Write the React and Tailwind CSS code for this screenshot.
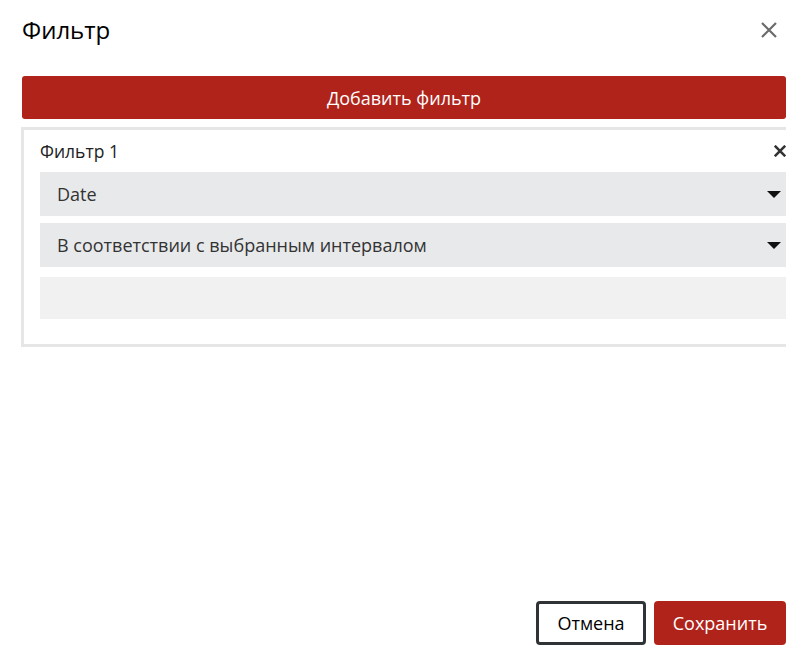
import React from "react";

const Caret = () => (
  <svg width="14" height="7" viewBox="0 0 14 7" className="shrink-0">
    <path d="M0 0h14L7 7z" fill="#111" />
  </svg>
);

const Cross = ({ size, color, width }) => (
  <svg width={size} height={size} viewBox="0 0 16 16">
    <path d="M1 1l14 14M15 1L1 15" stroke={color} strokeWidth={width} fill="none" />
  </svg>
);

export default function App() {
  return (
    <div className="h-[658px] w-[800px] bg-white flex flex-col font-['Open_Sans',sans-serif] text-[#222]">
      {/* Header */}
      <div className="flex items-center justify-between pl-[22px] pr-[23px] pt-[15px]">
        <h1 className="text-[24px] leading-[30px] text-black">Фильтр</h1>
        <Cross size={16} color="#6b6b6b" width={2.2} />
      </div>

      <div className="pl-[22px] pr-[14px] mt-[31px]">
        <button className="w-full h-[43px] rounded-[3px] bg-[#b0231a] text-white text-[18px] leading-[24px]">
          Добавить фильтр
        </button>
      </div>

      {/* Filter box, clipped at the right edge */}
      <div className="ml-[21px] mr-[14px] mt-[8px] overflow-hidden">
        <div className="w-[790px] border-[3px] border-[#e6e6e6] pl-[16px] pr-[20px] pt-[9px] pb-[25px]">
          <div className="flex items-center justify-between h-[24px] w-[746px]">
            <span className="text-[17.5px] leading-[24px] text-[#222]">Фильтр 1</span>
            <Cross size={12} color="#333" width={3.4} />
          </div>
          <div className="mt-[9px] w-[750px] flex flex-col">
            <div className="h-[44px] bg-[#e8e9ea] flex items-center justify-between pl-[17px] pr-[9px] text-[18px] leading-[24px] text-[#333]">
              <span>Date</span>
              <Caret />
            </div>
            <div className="mt-[7px] h-[44px] bg-[#e8e9ea] flex items-center justify-between pl-[17px] pr-[9px] text-[18px] leading-[24px] text-[#333]">
              <span>В соответствии с выбранным интервалом</span>
              <Caret />
            </div>
            <div className="mt-[10px] h-[42px] bg-[#f1f1f1]" />
          </div>
        </div>
      </div>

      {/* Footer */}
      <div className="mt-auto flex justify-end gap-[8px] pr-[14px] pb-[13px]">
        <button className="h-[44px] w-[110px] rounded-[4px] border-[3px] border-[#2f3336] bg-white text-[18px] text-black">
          Отмена
        </button>
        <button className="h-[44px] w-[132px] rounded-[4px] bg-[#b0231a] text-white text-[18px]">
          Сохранить
        </button>
      </div>
    </div>
  );
}
